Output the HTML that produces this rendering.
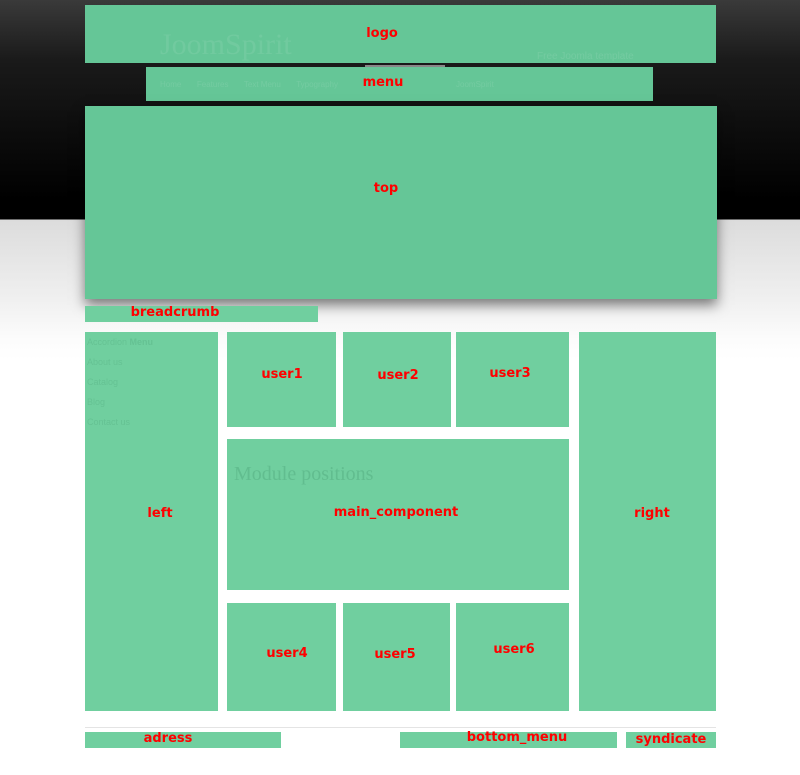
<!DOCTYPE html>
<html><head><meta charset="utf-8"><style>
*{margin:0;padding:0;box-sizing:border-box}
body{width:800px;height:775px;overflow:hidden;position:relative;font-family:"Liberation Sans",sans-serif;
background:linear-gradient(#3a3a3a 0,#1a1a1a 60px,#000 200px,#000 219px,#dcdcdc 220px,#f0f0f0 300px,#fcfcfc 340px,#fff 360px,#fff 100%)}
.b{position:absolute;background:#70cf9f;overflow:hidden}
.d{background:#65c697}
.l{position:absolute;color:#f00;font-family:"DejaVu Sans",sans-serif;font-weight:bold;font-size:13px;white-space:nowrap;transform:translateX(-50%)}
.f{position:absolute;color:rgba(40,120,80,.15);font-size:8px;line-height:10px;white-space:nowrap}
</style></head><body>
<div class="b d" style="left:85px;top:5px;width:631px;height:58px">
<div class="f" style="left:75px;top:25px;font-family:'Liberation Serif',serif;font-size:30px;line-height:30px;color:rgba(255,255,255,.08)">JoomSpirit</div>
<div class="f" style="left:452px;top:47px;font-size:10px;color:rgba(255,255,255,.1)">Free Joomla template</div>
</div>
<div style="position:absolute;left:365px;top:65px;width:80px;height:2px;background:#888"></div>
<div class="b d" style="left:146px;top:67px;width:507px;height:34px">
<div class="f" style="left:14px;top:13px;color:rgba(255,255,255,.1)">Home &nbsp; &nbsp; &nbsp; Features &nbsp; &nbsp; &nbsp; Text Menu &nbsp; &nbsp; &nbsp; Typography</div>
<div class="f" style="left:310px;top:13px;color:rgba(255,255,255,.1)">JoomSpirit</div>
</div>
<div class="b d" style="left:85px;top:106px;width:632px;height:193px;box-shadow:0 6px 12px rgba(0,0,0,.5)"></div>
<div class="b" style="left:85px;top:306px;width:233px;height:16px"></div>
<div class="b" style="left:85px;top:332px;width:133px;height:379px">
<div class="f" style="left:2px;top:5px;font-size:9px">Accordion <b>Menu</b><br><br>About us<br><br>Catalog<br><br>Blog<br><br>Contact us</div></div>
<div class="b" style="left:227px;top:332px;width:109px;height:95px"></div>
<div class="b" style="left:343px;top:332px;width:108px;height:95px"></div>
<div class="b" style="left:456px;top:332px;width:113px;height:95px"></div>
<div class="b" style="left:227px;top:439px;width:342px;height:151px">
<div class="f" style="left:7px;top:24px;font-family:'Liberation Serif',serif;font-size:20px;line-height:22px;color:rgba(40,120,80,.2)">Module positions</div></div>
<div class="b" style="left:227px;top:603px;width:109px;height:108px"></div>
<div class="b" style="left:343px;top:603px;width:107px;height:108px"></div>
<div class="b" style="left:456px;top:603px;width:113px;height:108px"></div>
<div class="b" style="left:579px;top:332px;width:137px;height:379px"></div>
<div style="position:absolute;left:85px;top:727px;width:631px;height:1px;background:#e4e4e4"></div>
<div class="b" style="left:85px;top:732px;width:196px;height:16px"></div>
<div class="b" style="left:400px;top:732px;width:217px;height:16px"></div>
<div class="b" style="left:626px;top:732px;width:90px;height:16px"></div>

<div class="l" style="left:382px;top:26px">logo</div>
<div class="l" style="left:383px;top:75px">menu</div>
<div class="l" style="left:386px;top:181px">top</div>
<div class="l" style="left:175px;top:305px">breadcrumb</div>
<div class="l" style="left:282px;top:367px">user1</div>
<div class="l" style="left:398px;top:368px">user2</div>
<div class="l" style="left:510px;top:366px">user3</div>
<div class="l" style="left:160px;top:506px">left</div>
<div class="l" style="left:396px;top:505px">main_component</div>
<div class="l" style="left:652px;top:506px">right</div>
<div class="l" style="left:287px;top:646px">user4</div>
<div class="l" style="left:395px;top:647px">user5</div>
<div class="l" style="left:514px;top:642px">user6</div>
<div class="l" style="left:168px;top:731px">adress</div>
<div class="l" style="left:517px;top:730px">bottom_menu</div>
<div class="l" style="left:671px;top:732px">syndicate</div>
</body></html>
